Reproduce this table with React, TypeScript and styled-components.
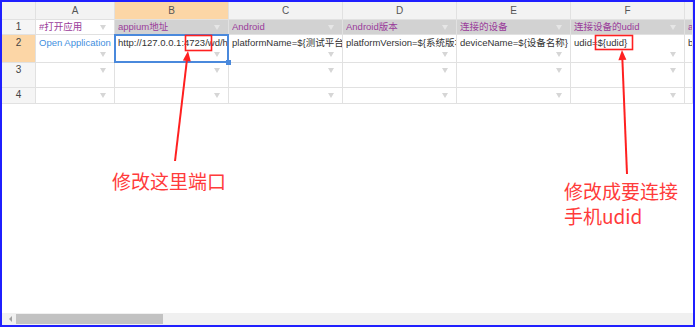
import React from "react";
import styled, { createGlobalStyle, css } from "styled-components";

const Global = createGlobalStyle`
  html, body { margin: 0; padding: 0; background: #ffffff; }
  body { font-family: "Liberation Sans", "Noto Sans CJK SC", sans-serif; }
  * { box-sizing: border-box; }
`;

const Frame = styled.div`
  position: relative;
  width: 695px;
  height: 327px;
  border: 2px solid #1f1fff;
  background: #ffffff;
  display: flex;
  flex-direction: column;
  overflow: hidden;
`;

const Sheet = styled.div`
  display: grid;
  grid-template-columns: 34px 79px 114px 114px 114px 114px 114px 1fr;
  grid-template-rows: 18px 15px 28px 25px 16px;
  font-size: 9.5px;
  color: #333333;
`;

const lines = css`
  border-right: 1px solid #e1e1e1;
  border-bottom: 1px solid #e1e1e1;
`;

const Corner = styled.div`
  ${lines};
  background: #f3f3f3;
`;

const ColHead = styled.div<{ $active?: boolean }>`
  ${lines};
  background: ${(p) => (p.$active ? "#fcd6a6" : "#f3f3f3")};
  display: flex;
  align-items: center;
  justify-content: center;
  color: #555555;
  font-size: 10px;
`;

const RowHead = styled.div<{ $active?: boolean }>`
  ${lines};
  background: ${(p) => (p.$active ? "#fcd6a6" : "#f5f5f5")};
  display: flex;
  align-items: flex-start;
  justify-content: center;
  padding-top: ${(p) => (p.$active ? "2px" : "1px")};
  color: #444444;
  font-size: 10px;
`;

type Tone = "title" | "titleWhite" | "link" | "plain";
type VAlign = "center" | "end" | "start";

const Cell = styled.div<{ $tone: Tone; $selected?: boolean }>`
  ${lines};
  position: relative;
  display: grid;
  grid-template-areas: "stack";
  grid-template-columns: minmax(0, 1fr);
  padding: 2px 0 4px 3px;
  background: ${(p) => (p.$tone === "title" ? "#d2d2d2" : "#ffffff")};
  color: ${(p) =>
    p.$tone === "title" || p.$tone === "titleWhite"
      ? "#9a3b9a"
      : p.$tone === "link"
      ? "#3f8fe0"
      : "#333333"};
  overflow: hidden;
  ${(p) =>
    p.$selected &&
    css`
      overflow: visible;
      &::after {
        content: "";
        position: absolute;
        left: -1px;
        top: -1px;
        right: -1px;
        bottom: -1px;
        border: 2px solid #4a89dc;
        pointer-events: none;
        z-index: 2;
      }
      &::before {
        content: "";
        position: absolute;
        right: -3px;
        bottom: -3px;
        width: 5px;
        height: 5px;
        background: #4a89dc;
        z-index: 3;
      }
    `}
`;

const CellText = styled.span<{ $valign: VAlign }>`
  grid-area: stack;
  white-space: nowrap;
  overflow: hidden;
  line-height: 12px;
  align-self: ${(p) => (p.$valign === "center" ? "center" : "start")};
  margin-top: ${(p) => (p.$valign === "center" ? "-2px" : "0")};
  margin-bottom: ${(p) => (p.$valign === "center" ? "-4px" : "0")};
`;

const Caret = styled.span<{ $dim?: boolean; $valign: VAlign }>`
  grid-area: stack;
  justify-self: end;
  align-self: ${(p) =>
    p.$valign === "center" ? "center" : p.$valign === "end" ? "end" : "start"};
  margin: ${(p) =>
    p.$valign === "center"
      ? "-2px 8px -4px 0"
      : p.$valign === "end"
      ? "0 8px 1px 0"
      : "3px 8px 0 0"};
  width: 0;
  height: 0;
  border-left: 3px solid transparent;
  border-right: 3px solid transparent;
  border-top: 5px solid ${(p) => (p.$dim ? "#e6e6e6" : "#d6d6d6")};
`;

const Spacer = styled.div`
  flex: 1;
`;

const Scrollbar = styled.div`
  height: 12px;
  background: #f0f0f0;
  display: flex;
  align-items: center;
  padding-left: 7px;
  gap: 4px;
`;

const ScrollArrow = styled.span`
  width: 0;
  height: 0;
  border-top: 3px solid transparent;
  border-bottom: 3px solid transparent;
  border-right: 3px solid #a0a0a0;
`;

const ScrollThumb = styled.div`
  width: 147px;
  height: 10px;
  background: #c2c2c2;
`;

const Overlay = styled.svg`
  position: absolute;
  left: -2px;
  top: -2px;
  width: 695px;
  height: 327px;
  pointer-events: none;
  z-index: 5;
`;

const Note = styled.div<{ $x: number; $y: number }>`
  position: absolute;
  left: ${(p) => p.$x - 2}px;
  top: ${(p) => p.$y - 2}px;
  color: #ff3b3b;
  font-family: "Noto Sans CJK SC", "Liberation Sans", sans-serif;
  font-size: 19px;
  line-height: 25px;
  white-space: nowrap;
  z-index: 6;
`;

const cols = ["A", "B", "C", "D", "E", "F"];

type CellDef = { text: string; tone: Tone };

const titleRow: CellDef[] = [
  { text: "#打开应用", tone: "titleWhite" },
  { text: "appium地址", tone: "title" },
  { text: "Android", tone: "title" },
  { text: "Android版本", tone: "title" },
  { text: "连接的设备", tone: "title" },
  { text: "连接设备的udid", tone: "title" },
  { text: "a", tone: "title" },
];

const dataRow: CellDef[] = [
  { text: "Open Application", tone: "link" },
  { text: "http://127.0.0.1:4723/wd/hub", tone: "plain" },
  { text: "platformName=${测试平台}", tone: "plain" },
  { text: "platformVersion=${系统版本}", tone: "plain" },
  { text: "deviceName=${设备名称}", tone: "plain" },
  { text: "udid=${udid}", tone: "plain" },
  { text: "b", tone: "plain" },
];

const blankRow: CellDef[] = dataRow.map(() => ({ text: "", tone: "plain" }));

function Arrow({ x1, y1, x2, y2 }: { x1: number; y1: number; x2: number; y2: number }) {
  const dx = x2 - x1;
  const dy = y2 - y1;
  const len = Math.hypot(dx, dy);
  const ux = dx / len;
  const uy = dy / len;
  const hl = 10;
  const hw = 4;
  const bx = x2 - ux * hl;
  const by = y2 - uy * hl;
  const px = -uy;
  const py = ux;
  const pts = `${x2},${y2} ${bx + px * hw},${by + py * hw} ${bx - px * hw},${by - py * hw}`;
  return (
    <g>
      <line x1={x1} y1={y1} x2={bx} y2={by} stroke="#ff2020" strokeWidth={2} />
      <polygon points={pts} fill="#ff2020" />
    </g>
  );
}

function Row({
  index,
  cells,
  valign,
  textAlign,
  active,
}: {
  index: number;
  cells: CellDef[];
  valign: VAlign;
  textAlign: VAlign;
  active?: boolean;
}) {
  return (
    <>
      <RowHead $active={active}>{index}</RowHead>
      {cells.map((d, i) => (
        <Cell key={i} $tone={d.tone} $selected={active && i === 1}>
          <CellText $valign={textAlign}>{d.text}</CellText>
          {i < 6 && <Caret $valign={valign} $dim={d.tone === "title"} />}
        </Cell>
      ))}
    </>
  );
}

export default function App() {
  return (
    <>
      <Global />
      <Frame>
        <Sheet>
          <Corner />
          {cols.map((c) => (
            <ColHead key={c} $active={c === "B"}>
              {c}
            </ColHead>
          ))}
          <ColHead />
          <Row index={1} cells={titleRow} valign="center" textAlign="center" />
          <Row index={2} cells={dataRow} valign="end" textAlign="start" active />
          <Row index={3} cells={blankRow} valign="start" textAlign="start" />
          <Row index={4} cells={blankRow} valign="center" textAlign="center" />
        </Sheet>
        <Spacer />
        <Scrollbar>
          <ScrollArrow />
          <ScrollThumb />
        </Scrollbar>

        <Overlay viewBox="0 0 695 327">
          <rect x={185.5} y={35.5} width={26} height={15} fill="none" stroke="#ff2020" strokeWidth={1.6} />
          <rect x={595.5} y={35.5} width={37} height={14} fill="none" stroke="#ff2020" strokeWidth={1.6} />
          <Arrow x1={175} y1={161} x2={188} y2={51} />
          <Arrow x1={627} y1={174} x2={622} y2={50} />
        </Overlay>
        <Note $x={112} $y={168}>修改这里端口</Note>
        <Note $x={564} $y={178}>
          修改成要连接
          <br />
          手机udid
        </Note>
      </Frame>
    </>
  );
}
